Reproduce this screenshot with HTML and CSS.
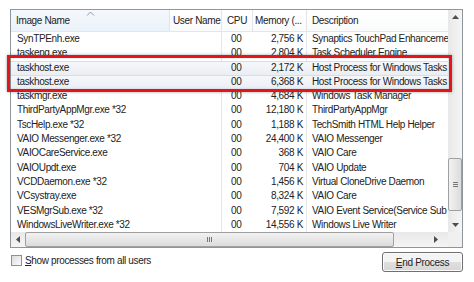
FILE: index.html
```html
<!DOCTYPE html>
<html lang="en">
<head>
  <meta charset="UTF-8" />
  <title>Processes</title>
  <link rel="stylesheet" href="styles.css">
</head>
<body>
  <div class="panel">
    <div class="listbox">
      <div class="list">
        <div class="head">
          <div class="col c1 sorted">Image Name
            <svg class="sort" width="9" height="5" viewBox="0 0 9 5"><path d="M1 4.5 L4.5 1 L8 4.5" fill="none" stroke="#8a98a8" stroke-width="1"/></svg>
          </div>
          <div class="col c2">User Name</div>
          <div class="col c3">CPU</div>
          <div class="col c4">Memory (...</div>
          <div class="col c5">Description</div>
        </div>
        <div class="rows">
          <div class="row"><span>SynTPEnh.exe</span><span></span><span>00</span><span class="num">2,756 K</span><span>Synaptics TouchPad Enhancemen</span></div>
          <div class="row"><span>taskeng.exe</span><span></span><span>00</span><span class="num">2,804 K</span><span>Task Scheduler Engine</span></div>
          <div class="row sel"><span>taskhost.exe</span><span></span><span>00</span><span class="num">2,172 K</span><span>Host Process for Windows Tasks</span></div>
          <div class="row sel"><span>taskhost.exe</span><span></span><span>00</span><span class="num">6,368 K</span><span>Host Process for Windows Tasks</span></div>
          <div class="row"><span>taskmgr.exe</span><span></span><span>00</span><span class="num">4,684 K</span><span>Windows Task Manager</span></div>
          <div class="row"><span>ThirdPartyAppMgr.exe *32</span><span></span><span>00</span><span class="num">12,180 K</span><span>ThirdPartyAppMgr</span></div>
          <div class="row"><span>TscHelp.exe *32</span><span></span><span>00</span><span class="num">1,188 K</span><span>TechSmith HTML Help Helper</span></div>
          <div class="row"><span>VAIO Messenger.exe *32</span><span></span><span>00</span><span class="num">24,400 K</span><span>VAIO Messenger</span></div>
          <div class="row"><span>VAIOCareService.exe</span><span></span><span>00</span><span class="num">368 K</span><span>VAIO Care</span></div>
          <div class="row"><span>VAIOUpdt.exe</span><span></span><span>00</span><span class="num">704 K</span><span>VAIO Update</span></div>
          <div class="row"><span>VCDDaemon.exe *32</span><span></span><span>00</span><span class="num">1,456 K</span><span>Virtual CloneDrive Daemon</span></div>
          <div class="row"><span>VCsystray.exe</span><span></span><span>00</span><span class="num">8,324 K</span><span>VAIO Care</span></div>
          <div class="row"><span>VESMgrSub.exe *32</span><span></span><span>00</span><span class="num">7,592 K</span><span>VAIO Event Service(Service Sub M</span></div>
          <div class="row"><span>WindowsLiveWriter.exe *32</span><span></span><span>00</span><span class="num">14,556 K</span><span>Windows Live Writer</span></div>
        </div>
      </div>

      <div class="vscroll">
        <div class="arrow">
          <svg width="7" height="4" viewBox="0 0 7 4"><path d="M0 4 L3.5 0 L7 4 Z" fill="#4d4d4d"/></svg>
        </div>
        <div class="track v">
          <div class="thumb vthumb"><span class="grip-v"></span></div>
        </div>
        <div class="arrow">
          <svg width="7" height="4" viewBox="0 0 7 4"><path d="M0 0 L7 0 L3.5 4 Z" fill="#4d4d4d"/></svg>
        </div>
      </div>

      <div class="hscroll">
        <div class="arrow">
          <svg width="4" height="7" viewBox="0 0 4 7"><path d="M4 0 L4 7 L0 3.5 Z" fill="#4d4d4d"/></svg>
        </div>
        <div class="track h">
          <div class="thumb hthumb"><span class="grip-h"></span></div>
        </div>
        <div class="arrow">
          <svg width="4" height="7" viewBox="0 0 4 7"><path d="M0 0 L4 3.5 L0 7 Z" fill="#4d4d4d"/></svg>
        </div>
      </div>
      <div class="corner"></div>

      <div class="mark"></div>
    </div>

    <div class="footer">
      <label class="check"><span class="box"></span><span><u>S</u>how processes from all users</span></label>
      <button class="btn"><u>E</u>nd Process</button>
    </div>
  </div>
</body>
</html>
```

FILE: styles.css
```css
body {
  margin: 0;
  background: #fff;
  font-family: 'Liberation Sans', Arial, sans-serif;
  font-size: 10px;
  letter-spacing: -0.35px;
  color: #222;
}

.panel {
  width: 453px;
  padding: 9px 0 0 10px;
}

.listbox {
  position: relative;
  display: grid;
  grid-template-columns: 437px 14px;
  grid-template-rows: 222px 15px;
  border: 1px solid #8e959c;
  height: 237px;
}

.list {
  overflow: hidden;
}

.head,
.row {
  display: grid;
  grid-template-columns: 159px 52px 31px 54px 141px;
}

.head {
  height: 21px;
  border-bottom: 1px solid #e3e6ea;
  background: linear-gradient(#fff, #fafbfc);
}

.col {
  position: relative;
  padding: 0 5px;
  line-height: 21px;
  white-space: nowrap;
  border-right: 1px solid #e2e4e7;
}

.col.sorted {
  background: linear-gradient(#f4f8fc, #eaf2fa);
}

.c2 { padding-left: 3px; }
.c3 { padding-left: 5px; }
.c4 { padding-left: 2px; }
.c5 { padding-left: 5px; border-right: none; }

.sort {
  position: absolute;
  left: 75px;
  top: 1px;
}

.rows {
  background:
    linear-gradient(#e4e6e8, #e4e6e8) 210px 0 / 1px 100% no-repeat,
    linear-gradient(#e4e6e8, #e4e6e8) 295px 0 / 1px 100% no-repeat;
}

.row {
  height: 14.3px;
  line-height: 14.3px;
  white-space: nowrap;
}

.row span {
  overflow: hidden;
}

.row span:nth-child(1) { padding-left: 6px; }
.row span:nth-child(3) { padding-left: 9px; }
.row span:nth-child(5) { padding-left: 5px; }

.row .num {
  text-align: right;
  padding-right: 4px;
}

.row.sel {
  background: linear-gradient(#f6f8fb, #eaeef3);
  box-shadow: inset 0 1px 0 #d9dee5;
}

.mark {
  position: absolute;
  left: -4px;
  top: 45px;
  width: 439px;
  height: 31px;
  border: 3px solid #e3151a;
  box-shadow: 0 0 3px rgba(0, 0, 0, 0.35), inset 0 0 2px rgba(0, 0, 0, 0.2);
}

.vscroll {
  display: grid;
  grid-template-rows: 14px 1fr 14px;
  background: linear-gradient(90deg, #e8e8e8, #f5f5f5);
}

.hscroll {
  display: grid;
  grid-template-columns: 14px 1fr 24px;
  background: linear-gradient(#e8e8e8, #f5f5f5);
}

.arrow {
  display: flex;
  align-items: center;
  justify-content: center;
}

.track {
  position: relative;
}

.thumb {
  position: absolute;
  display: flex;
  align-items: center;
  justify-content: center;
  border: 1px solid #a0a0a0;
  border-radius: 2px;
}

.vthumb {
  left: 0;
  right: 0;
  top: 134px;
  height: 51px;
  background: linear-gradient(90deg, #f2f2f2, #dcdcdc);
}

.hthumb {
  top: 0;
  bottom: 0;
  left: 0;
  width: 367px;
  background: linear-gradient(#f2f2f2, #dcdcdc);
}

.grip-v {
  width: 5px;
  height: 5px;
  background: repeating-linear-gradient(#777 0 1px, transparent 1px 2px);
}

.grip-h {
  width: 5px;
  height: 5px;
  background: repeating-linear-gradient(90deg, #777 0 1px, transparent 1px 2px);
}

.corner {
  background: #f0f0f0;
}

.footer {
  display: flex;
  justify-content: space-between;
  align-items: flex-start;
  margin-top: 4px;
}

.check {
  display: flex;
  align-items: center;
  gap: 3px;
  margin: 3px 0 0 1px;
  color: #222;
}

.box {
  width: 9px;
  height: 9px;
  border: 1px solid #8f8f8f;
  background: linear-gradient(135deg, #dcdcdc, #fbfbfb);
}

.btn {
  width: 81px;
  height: 20px;
  margin-right: 0;
  padding: 0;
  border: 1px solid #707070;
  border-radius: 3px;
  background: linear-gradient(#f4f4f4 50%, #dfdfdf 50%, #d6d6d6);
  font-family: inherit;
  font-size: 10px;
  letter-spacing: -0.3px;
  color: #222;
  box-shadow: inset 0 0 0 1px #fcfcfc;
}
```
